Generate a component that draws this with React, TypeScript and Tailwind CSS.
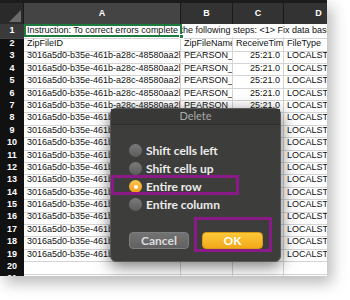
import React from 'react'

const ID = '3016a5d0-b35e-461b-a28c-48580aa2b7c1'
const GRID = 'grid grid-cols-[24px_157px_52px_51px_70px]'

type Row = { n: number; cells: string[] }

const rows: Row[] = [
  { n: 2, cells: ['ZipFileID', 'ZipFileName', 'ReceiveTime', 'FileType'] },
  ...Array.from({ length: 17 }, (_, i) => ({
    n: i + 3,
    cells: [ID, 'PEARSON_16', '25:21.0', 'LOCALSTUDENT'],
  })),
  { n: 20, cells: ['', '', '', ''] },
  { n: 21, cells: ['', '', '', ''] },
]

function Radio({ on }: { on?: boolean }) {
  if (on)
    return (
      <span className="flex h-[13px] w-[13px] items-center justify-center rounded-full bg-gradient-to-b from-[#fcc84a] to-[#f29a12]">
        <span className="h-[4px] w-[4px] rounded-full bg-white" />
      </span>
    )
  return <span className="h-[13px] w-[13px] rounded-full bg-gradient-to-b from-[#7a7a7a] to-[#5c5c5c]" />
}

function Sheet() {
  return (
    <div className="relative h-[276px] w-[327px] overflow-hidden bg-white font-['Liberation_Sans',sans-serif] text-[9px] text-[#111] shadow-[5px_7px_14px_rgba(0,0,0,0.28)]">
      <div className="h-[3px] bg-[#1c1c1c]" />
      {/* column letters */}
      <div className={`${GRID} h-[21px] bg-[#333] font-bold text-white`}>
        <div className="relative border-r border-[#1a1a1a] bg-[#2a2a2a]">
          <svg className="absolute bottom-[2px] right-[2px]" width="12" height="12" viewBox="0 0 12 12">
            <polygon points="12,0 12,12 0,12" fill="#6a6a6a" />
          </svg>
        </div>
        {['A', 'B', 'C', 'D'].map((c) => (
          <div
            key={c}
            className={`flex items-center justify-center border-r border-[#1a1a1a] ${c === 'A' ? 'bg-[#444]' : ''}`}
          >
            {c}
          </div>
        ))}
      </div>
      {/* row 1 */}
      <div className={`${GRID} relative h-[13px]`}>
        <div className="flex items-center justify-center border-b border-[#444] bg-[#3a3a3a] font-bold text-white">1</div>
        <div className="col-span-4 flex items-center overflow-hidden whitespace-nowrap border-b border-[#d4d4d4] px-[3px]">
          Instruction: To correct errors complete the following steps: &lt;1&gt; Fix data base errors
        </div>
        <div className="absolute left-[24px] top-0 h-[13px] w-[158px] border-2 border-[#1f7a3f]" />
        <div className="absolute left-[179px] top-[10px] h-[5px] w-[5px] border border-white bg-[#1f7a3f]" />
      </div>
      {rows.map((r) => (
        <div key={r.n} className={`${GRID} h-[12.4px]`}>
          <div className="flex items-center justify-center border-b border-[#3a3a3a] bg-[#111] font-bold text-white">
            {r.n}
          </div>
          {r.cells.map((c, i) => (
            <div
              key={i}
              className={`flex items-center overflow-hidden whitespace-nowrap border-b border-r border-[#d4d4d4] px-[3px] ${
                i === 2 && r.n > 2 ? 'justify-end' : ''
              }`}
            >
              {c}
            </div>
          ))}
        </div>
      ))}

      {/* Delete dialog */}
      <div className="absolute left-[110px] top-[108px] h-[154px] w-[171px] rounded-[6px] border border-[#5a5a5a] bg-[#3d3d3b] font-['Lato',sans-serif] shadow-[0_4px_16px_rgba(0,0,0,0.55)]">
        <div className="flex h-[16px] items-center justify-center border-b border-[#2e2e2e] bg-[#383836] text-[11px] text-[#a8a8a8]">
          Delete
        </div>
        <div className="flex flex-col gap-[5px] pl-[18px] pt-[19px] text-[12px] font-bold text-[#ececec]">
          {['Shift cells left', 'Shift cells up', 'Entire row', 'Entire column'].map((t) => (
            <div key={t} className="flex h-[13px] items-center gap-[4px]">
              <Radio on={t === 'Entire row'} />
              <span>{t}</span>
            </div>
          ))}
        </div>
        <div className="mt-[21px] flex gap-[13px] pl-[18px] text-[12px] font-bold">
          <div className="flex h-[17px] w-[60px] items-center justify-center rounded-[4px] border border-[#7e7e7e] bg-gradient-to-b from-[#737373] to-[#616161] text-[#dcdcdc]">
            Cancel
          </div>
          <div className="flex h-[17px] w-[61px] items-center justify-center rounded-[4px] border border-[#d99a14] bg-gradient-to-b from-[#fcc838] to-[#f2a917] text-white">
            OK
          </div>
        </div>
      </div>

      {/* highlight boxes */}
      <div className="absolute left-[111px] top-[175px] h-[20px] w-[128px] border-[3px] border-[#8b1a89]" />
      <div className="absolute left-[194px] top-[217px] h-[35px] w-[78px] border-[3px] border-[#8b1a89]" />
    </div>
  )
}

export default function App() {
  return (
    <div className="h-[300px] w-[350px] bg-white">
      <Sheet />
    </div>
  )
}
